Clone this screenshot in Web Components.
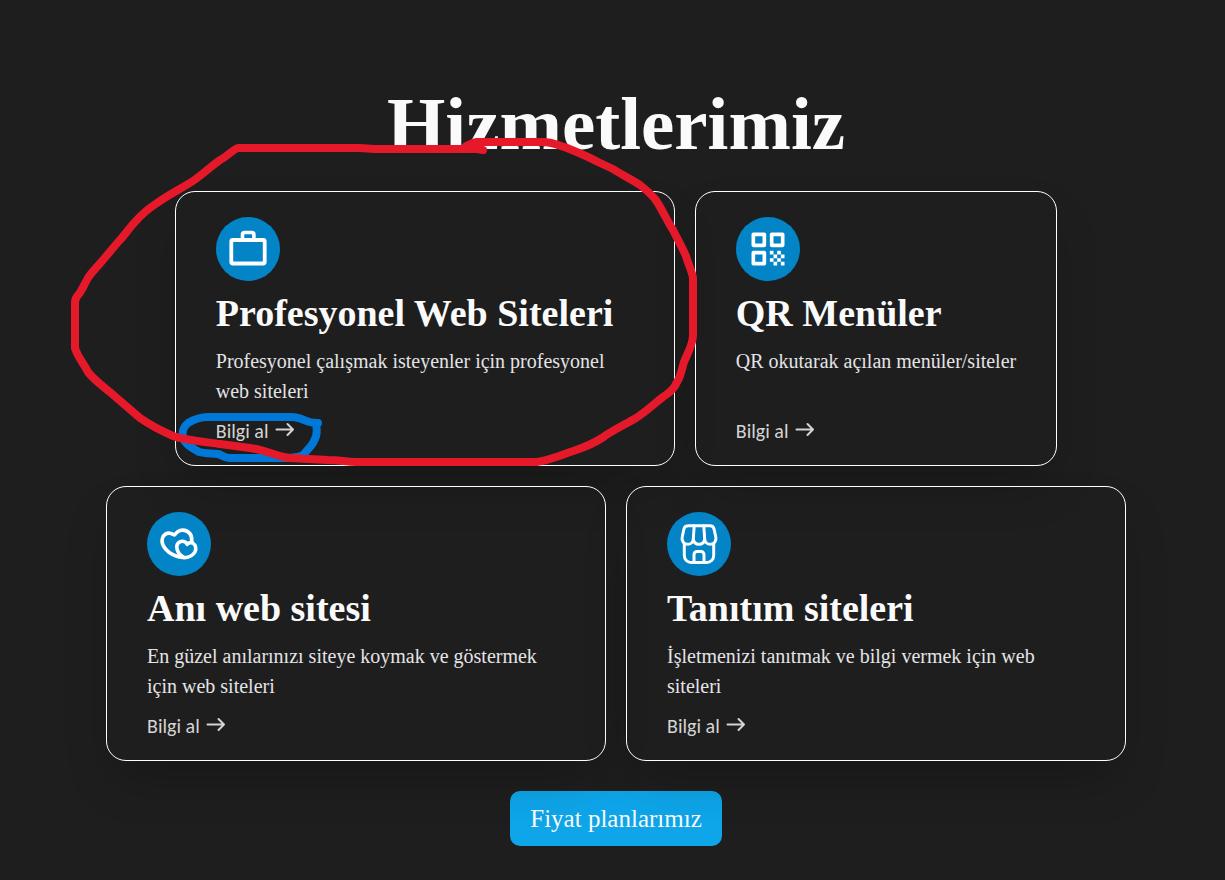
<!DOCTYPE html>
<html lang="tr">
<head>
<meta charset="utf-8">
<meta name="viewport" content="width=device-width, initial-scale=1">
<title>Hizmetlerimiz</title>
<style>
  body {
    margin: 0;
    min-height: 100vh;
    background-color: #1e1e1e;
    color: #fafafa;
    font-family: "Liberation Serif", "Times New Roman", serif;
  }
</style>
</head>
<body>
<services-section heading="Hizmetlerimiz">
  <service-card icon="briefcase" heading="Profesyonel Web Siteleri" href="#web">Profesyonel çalışmak isteyenler için profesyonel web siteleri</service-card>
  <service-card icon="qr" heading="QR Menüler" href="#qr">QR okutarak açılan menüler/siteler</service-card>
  <service-card icon="hearts" heading="Anı web sitesi" href="#ani">En güzel anılarınızı siteye koymak ve göstermek için web siteleri</service-card>
  <service-card icon="shop" heading="Tanıtım siteleri" href="#tanitim">İşletmenizi tanıtmak ve bilgi vermek için web siteleri</service-card>
  <plans-button slot="action">Fiyat planlarımız</plans-button>
  <pen-marks slot="marks"></pen-marks>
</services-section>

<script>
const icons = {
  briefcase: `
    <rect x="15.300" y="23" width="33.400" height="23.500" rx="1.500" stroke-width="3.800"/>
    <path d="M26.500 23v-5.500a2 2 0 0 1 2-2h7.400a2 2 0 0 1 2 2V23" stroke-width="3.600"/>`,
  qr: `
    <g transform="translate(10 10) scale(1.834)">
      <path d="M4 4h6v6H4zM14 4h6v6h-6zM4 14h6v6H4z" stroke-width="2"/>
      <path d="M13 13h2v2h-2zM17 13h2v2h-2zM15 15h2v2h-2zM19 15h2v2h-2zM13 17h2v2h-2zM17 17h2v2h-2zM15 19h2v2h-2zM19 19h2v2h-2z" fill="#fff" stroke="none"/>
    </g>`,
  hearts: `
    <path d="M35.500 45.500C28 44.500 22.500 41.500 19 37.500C16 34 14.500 30.500 15.200 27C16 22.500 20 20.300 24 21.400C25.500 21.800 26.500 22.500 27.500 23C29 21 30.500 19.200 33 18.500C36.500 17.500 40.500 18.800 42.800 21.500C44.500 23.600 45 26.500 44.800 29" stroke-width="3.600"/>
    <path d="M40.300 32.300C39 30 37.500 29 35 29.200C32 29.600 30 31.800 29.800 34.500C29.600 39.500 33 43.500 37.500 45.800C42 45.200 46 43.300 48 39.800C49.500 36.800 48.700 32.800 46 31.200C44 30.200 41.700 30.700 40.300 32.300Z" stroke-width="3.600"/>`,
  shop: `
    <path d="M17.300 31.500V43.500a7 7 0 0 0 7 7h15.400a7 7 0 0 0 7-7V31.500" stroke-width="3"/>
    <path d="M21 13.700h22c2.300 0 3.500 1 4 3.100L48.800 25c1 4-1.800 7.300-5.300 7.300c-3.100 0-5.600-2-5.800-5.300c-.4 3.300-2.700 5.300-5.700 5.300s-5.300-2-5.700-5.300c-.2 3.300-2.700 5.300-5.800 5.300c-3.500 0-6.300-3.300-5.300-7.300l1.800-8.200c.5-2.100 1.800-3.100 4.300-3.100z" stroke-width="3"/>
    <path d="M27.200 14l-.9 13M36.800 14l.9 13M27 50V42.500a3 3 0 0 1 3-3h4a3 3 0 0 1 3 3V50" stroke-width="3"/>`
}

const sectionTemplate = `
  <section>
    <h1></h1>
    <div class="cards"><slot></slot></div>
    <div class="action"><slot name="action"></slot></div>
  </section>
  <slot name="marks"></slot>
`

const sectionStyle = `
  :host {
    display: block;
    position: relative;
  }

  section {
    display: flex;
    flex-direction: column;
    align-items: center;
    padding: 81px 0 34px 7px;
  }

  h1 {
    margin: 0 0 24px;
    font-size: 75px;
    line-height: 86px;
  }

  .cards {
    display: flex;
    flex-wrap: wrap;
    justify-content: center;
    gap: 20px;
    max-width: 1220px;
  }

  .action {
    margin-top: 30px;
  }
`

class ServicesSection extends HTMLElement {
  constructor() {
    super()
    const shadowRoot = this.attachShadow({ mode: 'open' })
    shadowRoot.innerHTML = `${sectionTemplate}<style>${sectionStyle}</style>`
  }

  connectedCallback() {
    this.shadowRoot.querySelector('h1').textContent = this.getAttribute('heading')
  }
}

const cardTemplate = `
  <svg class="icon" viewBox="0 0 64 64" aria-hidden="true"></svg>
  <h2></h2>
  <p><slot></slot></p>
  <a>Bilgi al
    <svg class="arrow" viewBox="0 0 20 20" aria-hidden="true"><path d="M1.500 8.500H18M12.500 3l5.500 5.500-5.500 5.500"/></svg>
  </a>
`

// The card has no background: each one takes the shadow of the row above it.
const cardStyle = `
  :host {
    display: flex;
    flex-direction: column;
    align-items: flex-start;
    box-sizing: border-box;
    position: relative;
    z-index: 1;
    max-width: 500px;
    padding: 25px 40px 24px;
    border: 1px solid #fff;
    border-radius: 20px;
    box-shadow: 0 25px 50px -12px rgba(0, 0, 0, 0.25);
  }

  .icon {
    width: 64px;
    height: 64px;
    border-radius: 50%;
    background-color: #0284c7;
    fill: none;
    stroke: #fff;
    stroke-linecap: round;
    stroke-linejoin: round;
  }

  h2 {
    margin: 9px 0 10px;
    font-size: 38px;
    line-height: 46px;
  }

  p {
    margin: 0;
    color: #e4e4e7;
    font-size: 20px;
    line-height: 30px;
  }

  a {
    display: flex;
    align-items: center;
    gap: 6px;
    margin-top: auto;
    padding-top: 15px;
    color: #d4d4d4;
    font-family: Carlito, Calibri, Lato, sans-serif;
    font-size: 20px;
    line-height: 20px;
    text-decoration: none;
  }

  .arrow {
    width: 20px;
    height: 20px;
    fill: none;
    stroke: currentColor;
    stroke-width: 2;
    stroke-linecap: round;
    stroke-linejoin: round;
  }
`

class ServiceCard extends HTMLElement {
  constructor() {
    super()
    const shadowRoot = this.attachShadow({ mode: 'open' })
    shadowRoot.innerHTML = `${cardTemplate}<style>${cardStyle}</style>`
  }

  connectedCallback() {
    this.shadowRoot.querySelector('.icon').innerHTML = icons[this.getAttribute('icon')]
    this.shadowRoot.querySelector('h2').textContent = this.getAttribute('heading')
    this.shadowRoot.querySelector('a').setAttribute('href', this.getAttribute('href'))
  }
}

const buttonStyle = `
  :host {
    display: block;
  }

  button {
    display: block;
    padding: 13px 20px;
    border: 0;
    border-radius: 10px;
    background-color: #0ea5e9;
    color: #fafafa;
    font-family: inherit;
    font-size: 25px;
    line-height: 29px;
    cursor: pointer;
  }
`

class PlansButton extends HTMLElement {
  constructor() {
    super()
    const shadowRoot = this.attachShadow({ mode: 'open' })
    shadowRoot.innerHTML = `<button type="button"><slot></slot></button><style>${buttonStyle}</style>`
  }
}

const marksTemplate = `
  <svg viewBox="0 0 1225 880" preserveAspectRatio="xMidYMin meet" aria-hidden="true">
    <path stroke="#0078d7" d="M318 423C312 423 308 422 304 420C299 418 296 417 292 417H208C200 417 193 420 188 423C183 427 182 433 183 438C185 444 192 448 199 452C206 454 212 453 218 454C222 455 224 458 229 458H280C290 458 300 458 304 454C307 450 312 446 314 441C318 435 317 429 316 424"/>
    <path stroke="#e6192b" d="M483 150L477 149H375L360 148H238C232 150 228 156 220 160C210 167 202 175 193 181C182 188 168 195 157 203C148 209 140 216 135 222C129 228 125 235 119 241C113 248 108 254 103 260C97 267 91 273 88 278C85 283 82 290 79 294Q75 298 75 302V348C77 356 84 364 88 372C94 380 104 387 111 393L140 418C150 425 164 432 173 436C184 440 206 442 220 444L250 448C266 450 278 457 290 458L328 460C340 460 346 462 356 462H535C545 462 558 456 576 450C585 447 594 443 602 438C611 431 626 424 636 418C647 411 656 402 663 397C669 393 674 389 676 384C682 375 681 371 684 362C687 354 693 345 693 335V278C692 271 688 264 686 256C682 247 678 240 673 230C666 219 661 207 655 199C650 193 645 189 640 185C633 180 622 175 613 169L598 162C587 156 577 152 567 148C558 145 552 142 543 142H477Q468 144 464 148"/>
  </svg>
`

const marksStyle = `
  :host {
    position: absolute;
    inset: 0;
    z-index: 2;
    pointer-events: none;
  }

  svg {
    display: block;
    width: 100%;
    height: 100%;
    fill: none;
    stroke-width: 8;
    stroke-linecap: round;
    stroke-linejoin: round;
  }
`

class PenMarks extends HTMLElement {
  constructor() {
    super()
    const shadowRoot = this.attachShadow({ mode: 'open' })
    shadowRoot.innerHTML = `${marksTemplate}<style>${marksStyle}</style>`
  }
}

customElements.define('services-section', ServicesSection)
customElements.define('service-card', ServiceCard)
customElements.define('plans-button', PlansButton)
customElements.define('pen-marks', PenMarks)
</script>
</body>
</html>
